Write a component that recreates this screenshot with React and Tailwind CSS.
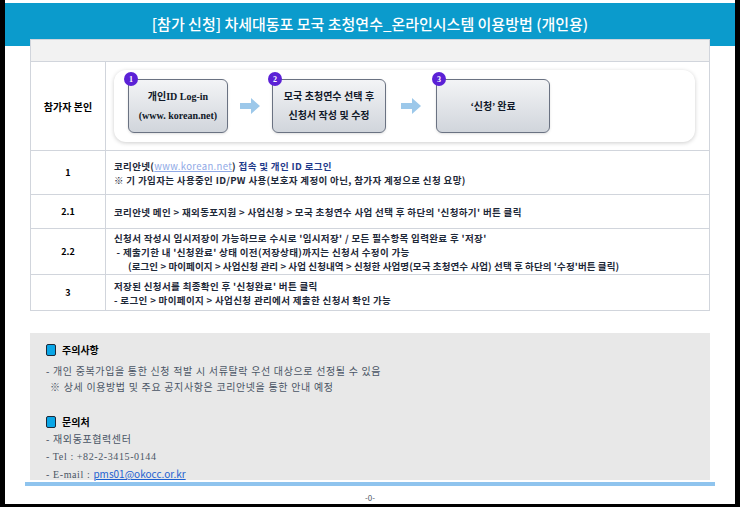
import React from "react";

const font = { fontFamily: '"Noto Sans CJK KR", "Noto Sans", sans-serif' };
const serif = { fontFamily: '"Liberation Serif", "Noto Sans CJK KR", serif' };

const Step = ({ n, children, w }) => (
  <div className={`relative ${w} h-[54px] rounded-md border border-gray-500 bg-gradient-to-b from-gray-100 to-gray-300 shadow flex flex-col items-center justify-center text-[10px] leading-[19px] font-bold text-gray-900`}>
    <span className="absolute -left-[5px] -top-[8px] w-[14px] h-[14px] rounded-full bg-[#5b21d6] text-white text-[8px] flex items-center justify-center">{n}</span>
    {children}
  </div>
);

const Arrow = ({ mx }) => (
  <svg width="20" height="16" viewBox="0 0 20 16" className={mx}>
    <path d="M0 5h11V0l9 8-9 8v-5H0z" fill="#9cc8ea" />
  </svg>
);

const Row = ({ num, h, children }) => (
  <div className={`flex border-t border-gray-300 ${h}`}>
    <div className="w-[75px] border-r border-gray-300 flex items-center justify-center text-[9px] font-bold">{num}</div>
    <div className="flex-1 flex flex-col justify-center pl-[8px] text-[9.5px] tracking-[0.35px] leading-[14px] font-bold text-gray-800">{children}</div>
  </div>
);

export default function App() {
  return (
    <div className="w-[740px] h-[507px] bg-black pb-[3px] px-[5px]" style={font}>
      <div className="bg-white h-full flex flex-col">
        <div className="h-[44px] mt-[3px] bg-[#0b9bcc] flex items-center justify-center text-white text-[15px] font-medium">
          [참가 신청] 차세대동포 모국 초청연수_온라인시스템 이용방법 (개인용)
        </div>
        <div className="mx-[25px] mt-[-7px] border border-gray-300 text-black">
          <div className="h-[21px] bg-[#f2f2f2]" />
          <div className="flex border-t border-gray-300 h-[89px]">
            <div className="w-[75px] border-r border-gray-300 flex items-center justify-center text-[10px] font-bold">참가자 본인</div>
            <div className="flex-1 p-[8px] pr-[14px]">
              <div className="h-full rounded-xl bg-white shadow-[0_1px_4px_rgba(0,0,0,0.2)] flex items-center pl-[14px]" style={serif}>
                <Step n="1" w="w-[100px]">
                  <span>개인ID Log-in</span>
                  <span>(www. korean.net)</span>
                </Step>
                <Arrow mx="mx-[12px]" />
                <Step n="2" w="w-[114px]">
                  <span>모국 초청연수 선택 후</span>
                  <span>신청서 작성 및 수정</span>
                </Step>
                <Arrow mx="mx-[15px]" />
                <Step n="3" w="w-[114px]">
                  <span>‘신청’ 완료</span>
                </Step>
              </div>
            </div>
          </div>
          <Row num="1" h="h-[44px]">
            <span>코리안넷(<span className="text-[#8fa9e6] underline font-normal">www.korean.net</span>) <span className="text-[#1f3a8a]">접속 및 개인 ID 로그인</span></span>
            <span>※ 기 가입자는 사용중인 ID/PW 사용(보호자 계정이 아닌, 참가자 계정으로 신청 요망)</span>
          </Row>
          <Row num="2.1" h="h-[34px]">
            <span>코리안넷 메인 &gt; 재외동포지원 &gt; 사업신청 &gt; 모국 초청연수 사업 선택 후 하단의 '신청하기' 버튼 클릭</span>
          </Row>
          <Row num="2.2" h="h-[46px]">
            <span>신청서 작성시 임시저장이 가능하므로 수시로 '임시저장' / 모든 필수항목 입력완료 후 '저장'</span>
            <span>&nbsp;- 제출기한 내 '신청완료' 상태 이전(저장상태)까지는 신청서 수정이 가능</span>
            <span className="pl-[14px] tracking-[0.1px]">(로그인 &gt; 마이페이지 &gt; 사업신청 관리 &gt; 사업 신청내역 &gt; 신청한 사업명(모국 초청연수 사업) 선택 후 하단의 '수정'버튼 클릭)</span>
          </Row>
          <Row num="3" h="h-[36px]">
            <span>저장된 신청서를 최종확인 후 '신청완료' 버튼 클릭</span>
            <span>- 로그인 &gt; 마이페이지 &gt; 사업신청 관리에서 제출한 신청서 확인 가능</span>
          </Row>
        </div>
        <div className="mx-[25px] mt-[22px] h-[147px] bg-[#e8e8e8] px-[16px] pt-[9px] text-[10px] tracking-[0.6px] text-gray-600" style={serif}>
          <div className="flex items-center gap-[6px] text-[10px] tracking-normal font-bold text-black" style={font}>
            <span className="w-[10px] h-[12px] rounded-[2px] bg-[#0aa6e6] border border-gray-800" />주의사항
          </div>
          <div className="mt-[7px] leading-[16px]">
            <div>- 개인 중복가입을 통한 신청 적발 시 서류탈락 우선 대상으로 선정될 수 있음</div>
            <div className="pl-[4px]">※ 상세 이용방법 및 주요 공지사항은 코리안넷을 통한 안내 예정</div>
          </div>
          <div className="mt-[18px] flex items-center gap-[6px] text-[10px] tracking-normal font-bold text-black" style={font}>
            <span className="w-[10px] h-[12px] rounded-[2px] bg-[#0aa6e6] border border-gray-800" />문의처
          </div>
          <div className="mt-[2px] leading-[17px]">
            <div>- 재외동포협력센터</div>
            <div>- Tel : +82-2-3415-0144</div>
            <div>- E-mail : <span className="text-[#1d5fd0] underline tracking-normal" style={font}>pms01@okocc.or.kr</span></div>
          </div>
        </div>
        <div className="mx-[20px] mt-[2px] h-[4px] bg-[#8fc4ee]" />
        <div className="mt-[6px] text-center text-[8px] text-gray-600">-0-</div>
      </div>
    </div>
  );
}
